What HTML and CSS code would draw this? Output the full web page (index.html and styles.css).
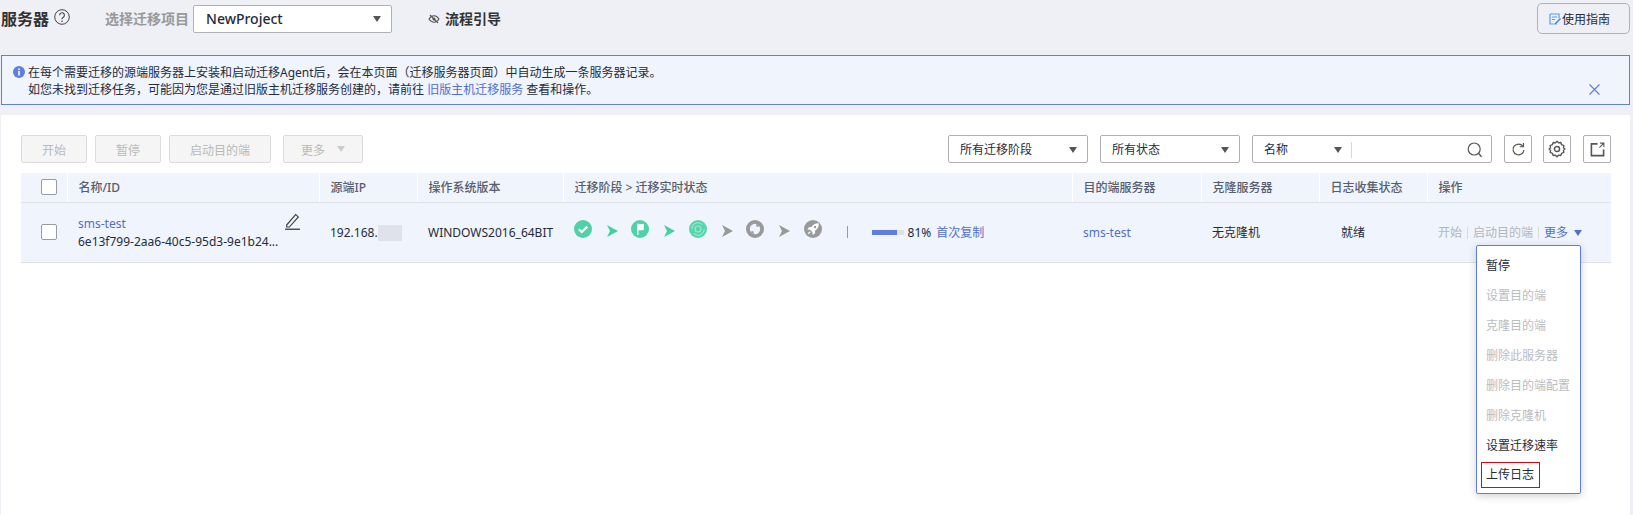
FILE: index.html
```html
<!DOCTYPE html>
<html lang="zh-CN">
<head>
<meta charset="utf-8">
<title>服务器</title>
<link rel="stylesheet" href="styles.css">
</head>
<body>
<div class="page">
  <header class="header">
    <h1 class="title">服务器</h1>
    <svg class="help" viewBox="0 0 16 16"><circle cx="8" cy="8" r="7.300" fill="none" stroke="#444" stroke-width="1"/><path d="M5.600 6.200a2.400 2.400 0 1 1 3.700 2c-.9.500-1.300 1-1.300 2" fill="none" stroke="#444" stroke-width="1.100"/><circle cx="8" cy="12.300" r=".8" fill="#444"/></svg>
    <span class="project-label">选择迁移项目</span>
    <div class="project-select"><span>NewProject</span><i class="caret"></i></div>
    <svg class="eye" viewBox="0 0 12 10"><path d="M1 5c1.400-2.200 3-3.200 5-3.200S9.600 2.800 11 5C9.600 7.200 8 8.200 6 8.200S2.400 7.200 1 5z" fill="none" stroke="#555" stroke-width="1.100"/><circle cx="6" cy="5" r="1.500" fill="#555"/><path d="M2 1l8 8" stroke="#555" stroke-width="1.100"/></svg>
    <span class="guide">流程引导</span>
    <button class="manual"><svg class="manual-icon" viewBox="0 0 12 12"><path d="M1 1h9v4M1 1v10h7" fill="none" stroke="#5b9bf0" stroke-width="1.200"/><path d="M3 4h5M3 6.500h3" stroke="#5b9bf0" stroke-width="1"/><path d="M6 10l5-5 1 1-5 5H6z" fill="#3f7fe0"/></svg>使用指南</button>
  </header>

  <section class="notice">
    <svg class="notice-icon" viewBox="0 0 12 12"><circle cx="6" cy="6" r="6" fill="#5f7fe0"/><rect x="5.200" y="5" width="1.600" height="4.500" fill="#fff"/><rect x="5.200" y="2.500" width="1.600" height="1.600" fill="#fff"/></svg>
    <div class="notice-text">
      <p>在每个需要迁移的源端服务器上安装和启动迁移Agent后，会在本页面（迁移服务器页面）中自动生成一条服务器记录。</p>
      <p>如您未找到迁移任务，可能因为您是通过旧版主机迁移服务创建的，请前往 <a class="link">旧版主机迁移服务</a> 查看和操作。</p>
    </div>
    <svg class="notice-close" viewBox="0 0 11 11"><path d="M.5.500l10 10M10.500.500l-10 10" stroke="#5f7fe0" stroke-width="1.200"/></svg>
  </section>

  <main class="panel">
    <div class="toolbar">
      <button class="btn btn-start">开始</button>
      <button class="btn btn-pause">暂停</button>
      <button class="btn btn-boot">启动目的端</button>
      <button class="btn btn-more">更多<i class="caret caret-light"></i></button>
      <div class="filter filter-stage"><span>所有迁移阶段</span><i class="caret"></i></div>
      <div class="filter filter-status"><span>所有状态</span><i class="caret"></i></div>
      <div class="search">
        <div class="search-key"><span>名称</span><i class="caret"></i></div>
        <svg class="search-icon" viewBox="0 0 16 16"><circle cx="7.200" cy="7" r="6" fill="none" stroke="#555" stroke-width="1.200"/><path d="M11.500 11.300l3 3.500" stroke="#555" stroke-width="1.400"/></svg>
      </div>
      <button class="icon-btn"><svg viewBox="0 0 16 16"><path d="M12.600 4.400A5.800 5.800 0 1 0 13.800 8.500" fill="none" stroke="#555" stroke-width="1.300"/><path d="M13.300 1v4H9.300" fill="none" stroke="#555" stroke-width="1.200"/></svg></button>
      <button class="icon-btn icon-btn-wide"><svg class="gear" viewBox="0 0 16 16"><path d="M8 1l1.300 1.500 2.100-.3.700 2 2 .7-.4 2L15 8l-1.300 1.100.4 2-2 .7-.7 2-2.100-.3L8 15l-1.300-1.500-2.100.3-.7-2-2-.7.4-2L1 8l1.300-1.100-.4-2 2-.7.7-2 2.100.3z" fill="none" stroke="#555" stroke-width="1.200" stroke-linejoin="round"/><circle cx="8" cy="8" r="2.300" fill="none" stroke="#555" stroke-width="1.300"/></svg></button>
      <button class="icon-btn"><svg viewBox="0 0 16 16"><path d="M8 2H1.500v12.500H14.500V8" fill="none" stroke="#555" stroke-width="1.700"/><path d="M10 6l4.300-4.300M10.800 1.200h4v4" fill="none" stroke="#555" stroke-width="1.100"/></svg></button>
    </div>

    <table class="grid">
      <colgroup>
        <col class="c-check"><col class="c-name"><col class="c-ip"><col class="c-os"><col class="c-stage"><col class="c-target"><col class="c-clone"><col class="c-log"><col class="c-op">
      </colgroup>
      <thead>
        <tr>
          <th class="cell-check"><span class="checkbox"></span></th>
          <th>名称/ID</th>
          <th>源端IP</th>
          <th>操作系统版本</th>
          <th>迁移阶段 &gt; 迁移实时状态</th>
          <th>目的端服务器</th>
          <th>克隆服务器</th>
          <th>日志收集状态</th>
          <th>操作</th>
        </tr>
      </thead>
      <tbody>
        <tr>
          <td class="cell-check"><span class="checkbox"></span></td>
          <td class="cell-name">
            <a class="link name-link">sms-test</a>
            <div class="server-id">6e13f799-2aa6-40c5-95d3-9e1b24...</div>
            <svg class="pencil" viewBox="0 0 14 16"><path d="M1.500 11.300L10 1.500l2.500 2.200-8.500 9.500H1.500z" fill="none" stroke="#444" stroke-width="1.100"/><path d="M0 15.300h14" stroke="#444" stroke-width="1.300"/></svg>
          </td>
          <td><span class="ip">192.168.<i class="mask"></i></span></td>
          <td>WINDOWS2016_64BIT</td>
          <td>
            <div class="stages">
              <svg class="stage" viewBox="0 0 18 18"><circle cx="9" cy="9" r="9" fill="#4fd2a6"/><path d="M4.800 9.200l3 2.800 5.400-5.400" fill="none" stroke="#fff" stroke-width="2.200"/></svg>
              <svg class="arrow" viewBox="0 0 11 12"><path d="M0 0l11 6-11 6 3-6z" fill="#45d0a0"/></svg>
              <svg class="stage" viewBox="0 0 18 18"><circle cx="9" cy="9" r="9" fill="#4fd2a6"/><path d="M6.200 3.800V15h1.300v-4.800c2 0 3.300.400 5.300-.300V3.800c-2.300.7-3.800 0-6.600 0z" fill="#fff"/></svg>
              <svg class="arrow" viewBox="0 0 11 12"><path d="M0 0l11 6-11 6 3-6z" fill="#45d0a0"/></svg>
              <svg class="stage" viewBox="0 0 18 18"><circle cx="9" cy="9" r="9" fill="#58d4ad"/><path d="M2.800 9A6.200 6.200 0 0 1 13.300 4.600M15.200 9a6.200 6.200 0 0 1-10.500 4.400" fill="none" stroke="#9fe8cf" stroke-width="1.100"/><circle cx="9" cy="9" r="3" fill="none" stroke="#9fe8cf" stroke-width="1.100"/></svg>
              <svg class="arrow" viewBox="0 0 11 12"><path d="M0 0l11 6-11 6 3-6z" fill="#999"/></svg>
              <svg class="stage" viewBox="0 0 18 18"><circle cx="9" cy="9" r="9" fill="#999"/><circle cx="9" cy="9" r="5.200" fill="#f0f4fc"/><path d="M10 3.300l3.700 3-3 .8zM8 14.700l-3.700-3 3-.8z" fill="#999"/></svg>
              <svg class="arrow" viewBox="0 0 11 12"><path d="M0 0l11 6-11 6 3-6z" fill="#999"/></svg>
              <svg class="stage" viewBox="0 0 18 18"><circle cx="9" cy="9" r="9" fill="#999"/><path d="M14.800 3.200c-3.500-.2-5.800 1.500-7.300 3.900l-2.600.1-1.600 2.300 2.700.3 2.400 2.400.3 2.700 2.300-1.600.1-2.600c2.400-1.500 4-3.800 3.700-7.900z" fill="#fff"/><circle cx="11" cy="7" r="1.200" fill="#999"/><path d="M5.200 11.200l-1.700 3.300 3.300-1.700z" fill="#fff"/></svg>
              <span class="stage-sep"></span>
              <span class="progress"><span class="progress-fill" style="width:81%"></span></span>
              <span class="percent">81%</span>
              <a class="link">首次复制</a>
            </div>
          </td>
          <td><a class="link">sms-test</a></td>
          <td>无克隆机</td>
          <td class="cell-log">就绪</td>
          <td class="cell-op">
            <div class="ops">
              <span class="muted">开始</span><i class="op-sep"></i><span class="muted">启动目的端</span><i class="op-sep"></i><a class="link">更多</a><i class="caret caret-blue"></i>
            </div>
            <ul class="menu">
              <li>暂停</li>
              <li class="off">设置目的端</li>
              <li class="off">克隆目的端</li>
              <li class="off">删除此服务器</li>
              <li class="off">删除目的端配置</li>
              <li class="off">删除克隆机</li>
              <li>设置迁移速率</li>
              <li><span class="marked">上传日志</span></li>
            </ul>
          </td>
        </tr>
      </tbody>
    </table>
  </main>
</div>
</body>
</html>
```

FILE: styles.css
```css
* { box-sizing: border-box; }
html, body { margin: 0; height: 100%; overflow: hidden; }
body {
  background: #eef0f5;
  color: #252b3a;
  font: 12px/18px "Noto Sans", "Noto Sans CJK SC", sans-serif;
}
i { display: inline-block; font-style: normal; }
p { margin: 0; }
ul { list-style: none; margin: 0; padding: 0; }
.link { color: #526ecc; }
.page { display: flex; flex-direction: column; height: 515px; padding: 0 3px 0 1px; }

.header { display: flex; align-items: center; height: 37px; margin-bottom: 18px; }
.title { margin: 0; font-size: 16px; line-height: 24px; font-weight: 700; color: #333; }
.help { width: 16px; height: 16px; margin: -3px 0 0 5px; }
.project-label { margin-left: 35px; font-size: 14px; font-weight: 700; color: #999; }
.project-select {
  display: flex; align-items: center; justify-content: space-between;
  width: 199px; height: 28px; margin: 1px 0 0 4px; padding: 0 10px 0 12px;
  background: #fff; border: 1px solid #b0b0b5; border-radius: 2px;
  font-size: 14px; font-weight: 500; color: #252b3a;
}
.eye { width: 12px; height: 10px; margin-left: 36px; }
.guide { margin-left: 5px; font-size: 14px; font-weight: 700; color: #333; }
.manual {
  display: flex; align-items: center; width: 93px; height: 31px; margin-left: auto; padding: 0 0 0 11px;
  background: #eef0f5; border: 1px solid #b0b0b5; border-radius: 5px;
  font: 12px "Noto Sans CJK SC", sans-serif; color: #252b3a;
}
.manual-icon { width: 12px; height: 12px; margin-right: 1px; }

.caret { width: 0; height: 0; border: 4.500px solid transparent; border-top: 6px solid #555; border-bottom: 0; }
.caret-light { border-top-color: #ccc; margin-left: 12px; }
.caret-blue { border-top-color: #526ecc; margin-left: 6px; }

.notice {
  display: flex; height: 50px; margin-bottom: 10px; padding: 8px 0 0 11px;
  background: #f0f4fd; border: 1px solid #5f7fe0;
}
.notice-icon { width: 12px; height: 12px; margin: 2px 3px 0 0; flex: none; }
.notice-text { line-height: 17px; color: #252b3a; }
.notice-close { width: 11px; height: 11px; margin: 20px 29px 0 auto; flex: none; }

.panel { flex: 1; padding: 20px 19px 0 20px; background: #fff; }
.toolbar { display: flex; align-items: center; height: 28px; margin-bottom: 10px; }
.btn {
  height: 28px; padding: 0; background: #f5f5f5; border: 1px solid #dcdcdc; border-radius: 2px;
  font: 12px "Noto Sans CJK SC", sans-serif; color: #b9b9b9;
  display: flex; align-items: center; justify-content: center;
}
.btn-start, .btn-pause { width: 66px; margin-right: 8px; }
.btn-boot { width: 102px; margin-right: 12px; }
.btn-more { width: 80px; margin-right: auto; }
.filter {
  display: flex; align-items: center; justify-content: space-between;
  width: 140px; height: 28px; padding: 1px 10px 0 11px; margin-right: 12px;
  background: #fff; border: 1px solid #aeaeb4; border-radius: 2px;
}
.search {
  display: flex; align-items: center; justify-content: space-between;
  width: 240px; height: 28px; padding: 1px 8px 0 11px; margin-right: 12px;
  border: 1px solid #aeaeb4; border-radius: 2px;
}
.search-key { display: flex; align-items: center; justify-content: space-between; width: 88px; padding-right: 10px; position: relative; }
.search-key::after { content: ""; position: absolute; right: 0; top: 1px; width: 1px; height: 16px; background: #d8d8d8; }
.search-icon { width: 16px; height: 16px; }
.icon-btn {
  display: flex; align-items: center; justify-content: center;
  width: 28px; height: 28px; margin-right: 11px; padding: 0;
  background: #fff; border: 1px solid #aeaeb4; border-radius: 2px;
}
.icon-btn:last-child { margin-right: 0; }
.icon-btn-wide { margin-right: 12px; }
.icon-btn svg { width: 15px; height: 15px; }
.icon-btn .gear { width: 18px; height: 18px; }

.grid { width: 1590px; table-layout: fixed; border-collapse: collapse; }
.c-check { width: 46px; } .c-name { width: 252px; } .c-ip { width: 98px; } .c-os { width: 146px; }
.c-stage { width: 509px; } .c-target { width: 129px; } .c-clone { width: 118px; } .c-log { width: 108px; } .c-op { width: 184px; }
.grid th {
  height: 29px; padding: 1px 11px 0; text-align: left; font-weight: 500; color: #575d6c;
  background: #f0f4fc; border-bottom: 1px solid #dfe1e6; border-left: 1px solid #fff;
}
.grid th:first-child { border-left: 0; }
.grid td { height: 60px; padding: 2px 11px 0; background: #f0f4fc; border-bottom: 1px solid #dfe1e6; vertical-align: middle; }
.grid .cell-check { padding: 0 0 0 20px; }
.grid .cell-log { padding-left: 22px; }
.grid .cell-name { padding-top: 1px; }
.checkbox { display: block; width: 16px; height: 16px; background: #fff; border: 1px solid #9a9aa2; border-radius: 2px; }
.cell-name { position: relative; }
.name-link, .server-id { display: block; }
.pencil { position: absolute; left: 218px; top: 10px; width: 15px; height: 17px; }
.ip { display: flex; align-items: center; }
.mask { width: 24px; height: 16px; background: #dfe2ea; }
.stages { display: flex; align-items: center; margin-top: -8px; }
.stage { width: 18px; height: 18px; flex: none; }
.arrow { width: 11px; height: 12px; margin: 4px 13.400px 0 15px; flex: none; }
.stage-sep { width: 1px; height: 12px; margin: 5px 24px 0 25px; background: #999; }
.progress { width: 32px; height: 5px; margin-top: 7px; background: #dfe1e6; }
.progress-fill { display: block; height: 5px; background: #5f7fe0; }
.percent { margin: 7px 5px 0 4px; }
.stages .link { margin-top: 7px; }
.cell-op { position: relative; }
.ops { display: flex; align-items: center; }
.muted { color: #b3b6bd; }
.op-sep { width: 1px; height: 12px; margin: 0 5px; background: #d8dae0; }
.menu {
  position: absolute; left: 49px; top: 42px; width: 105px; height: 249px; padding: 5px 0 2px 9px;
  background: #fff; border: 1px solid #5f7fe0; border-radius: 2px; box-shadow: 0 2px 8px rgba(0,0,0,.18); z-index: 2;
}
.menu li { display: flex; align-items: center; height: 30px; color: #252b3a; white-space: nowrap; }
.menu .off { color: #b9bcc3; }
.marked { margin: -1px 0 0 -5px; padding: 3px 5px 3px 4px; border: 1px solid #e60012; line-height: 18px; }
```
